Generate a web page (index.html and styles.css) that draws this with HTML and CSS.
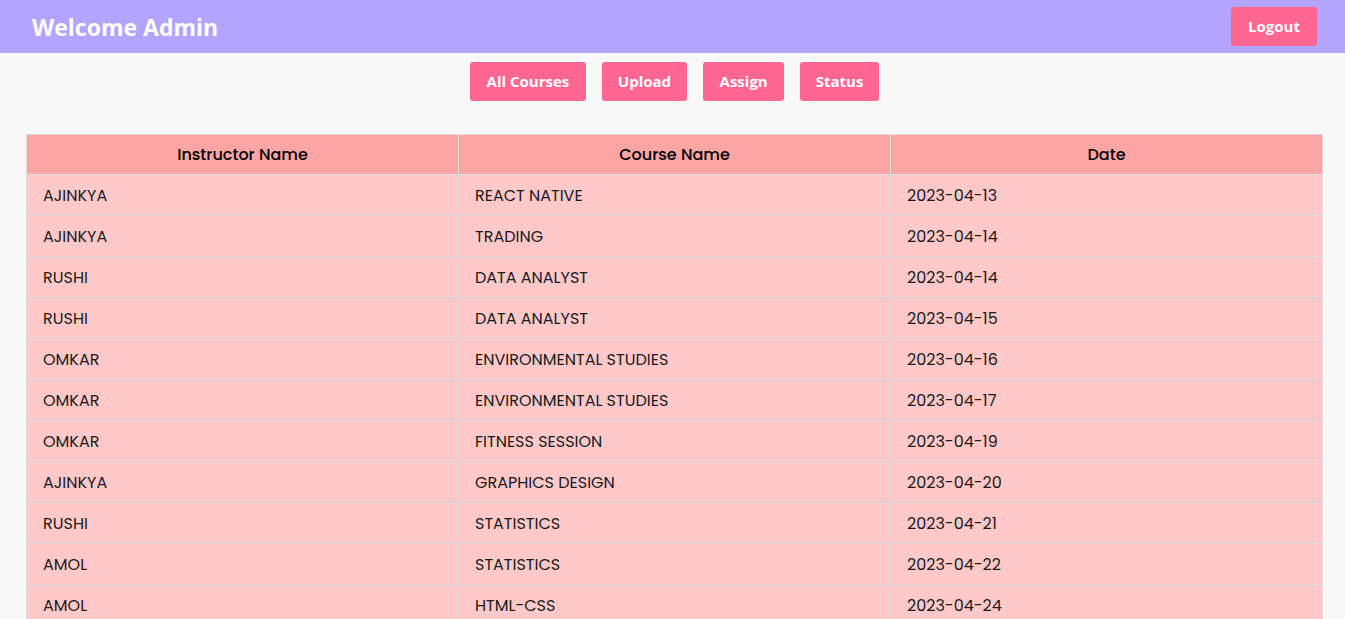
FILE: index.html
```html
<!DOCTYPE html>
<html>
<head>
<meta charset="utf-8">
<link rel="stylesheet" href="styles.css">
</head>
<body>
<header class="topbar">
  <h1 class="title">Welcome Admin</h1>
  <button class="btn logout">Logout</button>
</header>
<nav class="nav">
  <button class="btn btn-wide">All Courses</button>
  <button class="btn">Upload</button>
  <button class="btn btn-wide">Assign</button>
  <button class="btn btn-narrow">Status</button>
</nav>
<main class="content">
  <table class="grid">
    <thead>
      <tr><th>Instructor Name</th><th>Course Name</th><th>Date</th></tr>
    </thead>
    <tbody>
      <tr><td>AJINKYA</td><td>REACT NATIVE</td><td>2023-04-13</td></tr>
      <tr><td>AJINKYA</td><td>TRADING</td><td>2023-04-14</td></tr>
      <tr><td>RUSHI</td><td>DATA ANALYST</td><td>2023-04-14</td></tr>
      <tr><td>RUSHI</td><td>DATA ANALYST</td><td>2023-04-15</td></tr>
      <tr><td>OMKAR</td><td>ENVIRONMENTAL STUDIES</td><td>2023-04-16</td></tr>
      <tr><td>OMKAR</td><td>ENVIRONMENTAL STUDIES</td><td>2023-04-17</td></tr>
      <tr><td>OMKAR</td><td>FITNESS SESSION</td><td>2023-04-19</td></tr>
      <tr><td>AJINKYA</td><td>GRAPHICS DESIGN</td><td>2023-04-20</td></tr>
      <tr><td>RUSHI</td><td>STATISTICS</td><td>2023-04-21</td></tr>
      <tr><td>AMOL</td><td>STATISTICS</td><td>2023-04-22</td></tr>
      <tr><td>AMOL</td><td>HTML-CSS</td><td>2023-04-24</td></tr>
    </tbody>
  </table>
</main>
</body>
</html>
```
FILE: styles.css
```css
* { box-sizing: border-box; }
html, body { margin: 0; padding: 0; }
body {
  background: #f8f8f8;
  font-family: "Open Sans", "Noto Sans", sans-serif;
}
.topbar {
  height: 53px;
  background: #b3a4ff;
  display: flex;
  align-items: center;
  justify-content: space-between;
  padding: 0 28px 0 32px;
}
.title {
  margin: 0;
  color: #fff;
  font-size: 23px;
  font-weight: 700;
}
.btn {
  background: #ff6691;
  color: #fff;
  border: none;
  border-radius: 3px;
  height: 39px;
  padding: 0 16px 1px;
  font-family: "Open Sans", "Noto Sans", sans-serif;
  font-size: 15px;
  font-weight: 700;
}
.btn-wide { padding: 0 16.5px 1px; }
.btn-narrow { padding: 0 15.5px 1px; }
.logout { width: 86px; padding: 0 0 2px; }
.nav {
  display: flex;
  justify-content: center;
  gap: 16px;
  padding: 9px 0 0 4px;
}
.content {
  padding: 33px 22px 0 26px;
}
.grid {
  width: 100%;
  border-collapse: separate;
  border-spacing: 0;
  table-layout: fixed;
  border-top: 1px solid #dcdcdc;
  border-left: 1px solid #dcdcdc;
  font-family: "Poppins", "Inter", "Noto Sans", sans-serif;
  color: #1a1a1a;
}
.grid th, .grid td {
  border-right: 1px solid #dcdcdc;
  border-bottom: 1px solid #dcdcdc;
}
.grid th {
  background: #fca5a5;
  height: 40px;
  font-size: 16px;
  font-weight: 500;
  text-align: center;
  color: #000;
}
.grid td {
  background: #ffc9c9;
  height: 41px;
  font-size: 16px;
  padding: 0 16px;
  text-align: left;
}
```
